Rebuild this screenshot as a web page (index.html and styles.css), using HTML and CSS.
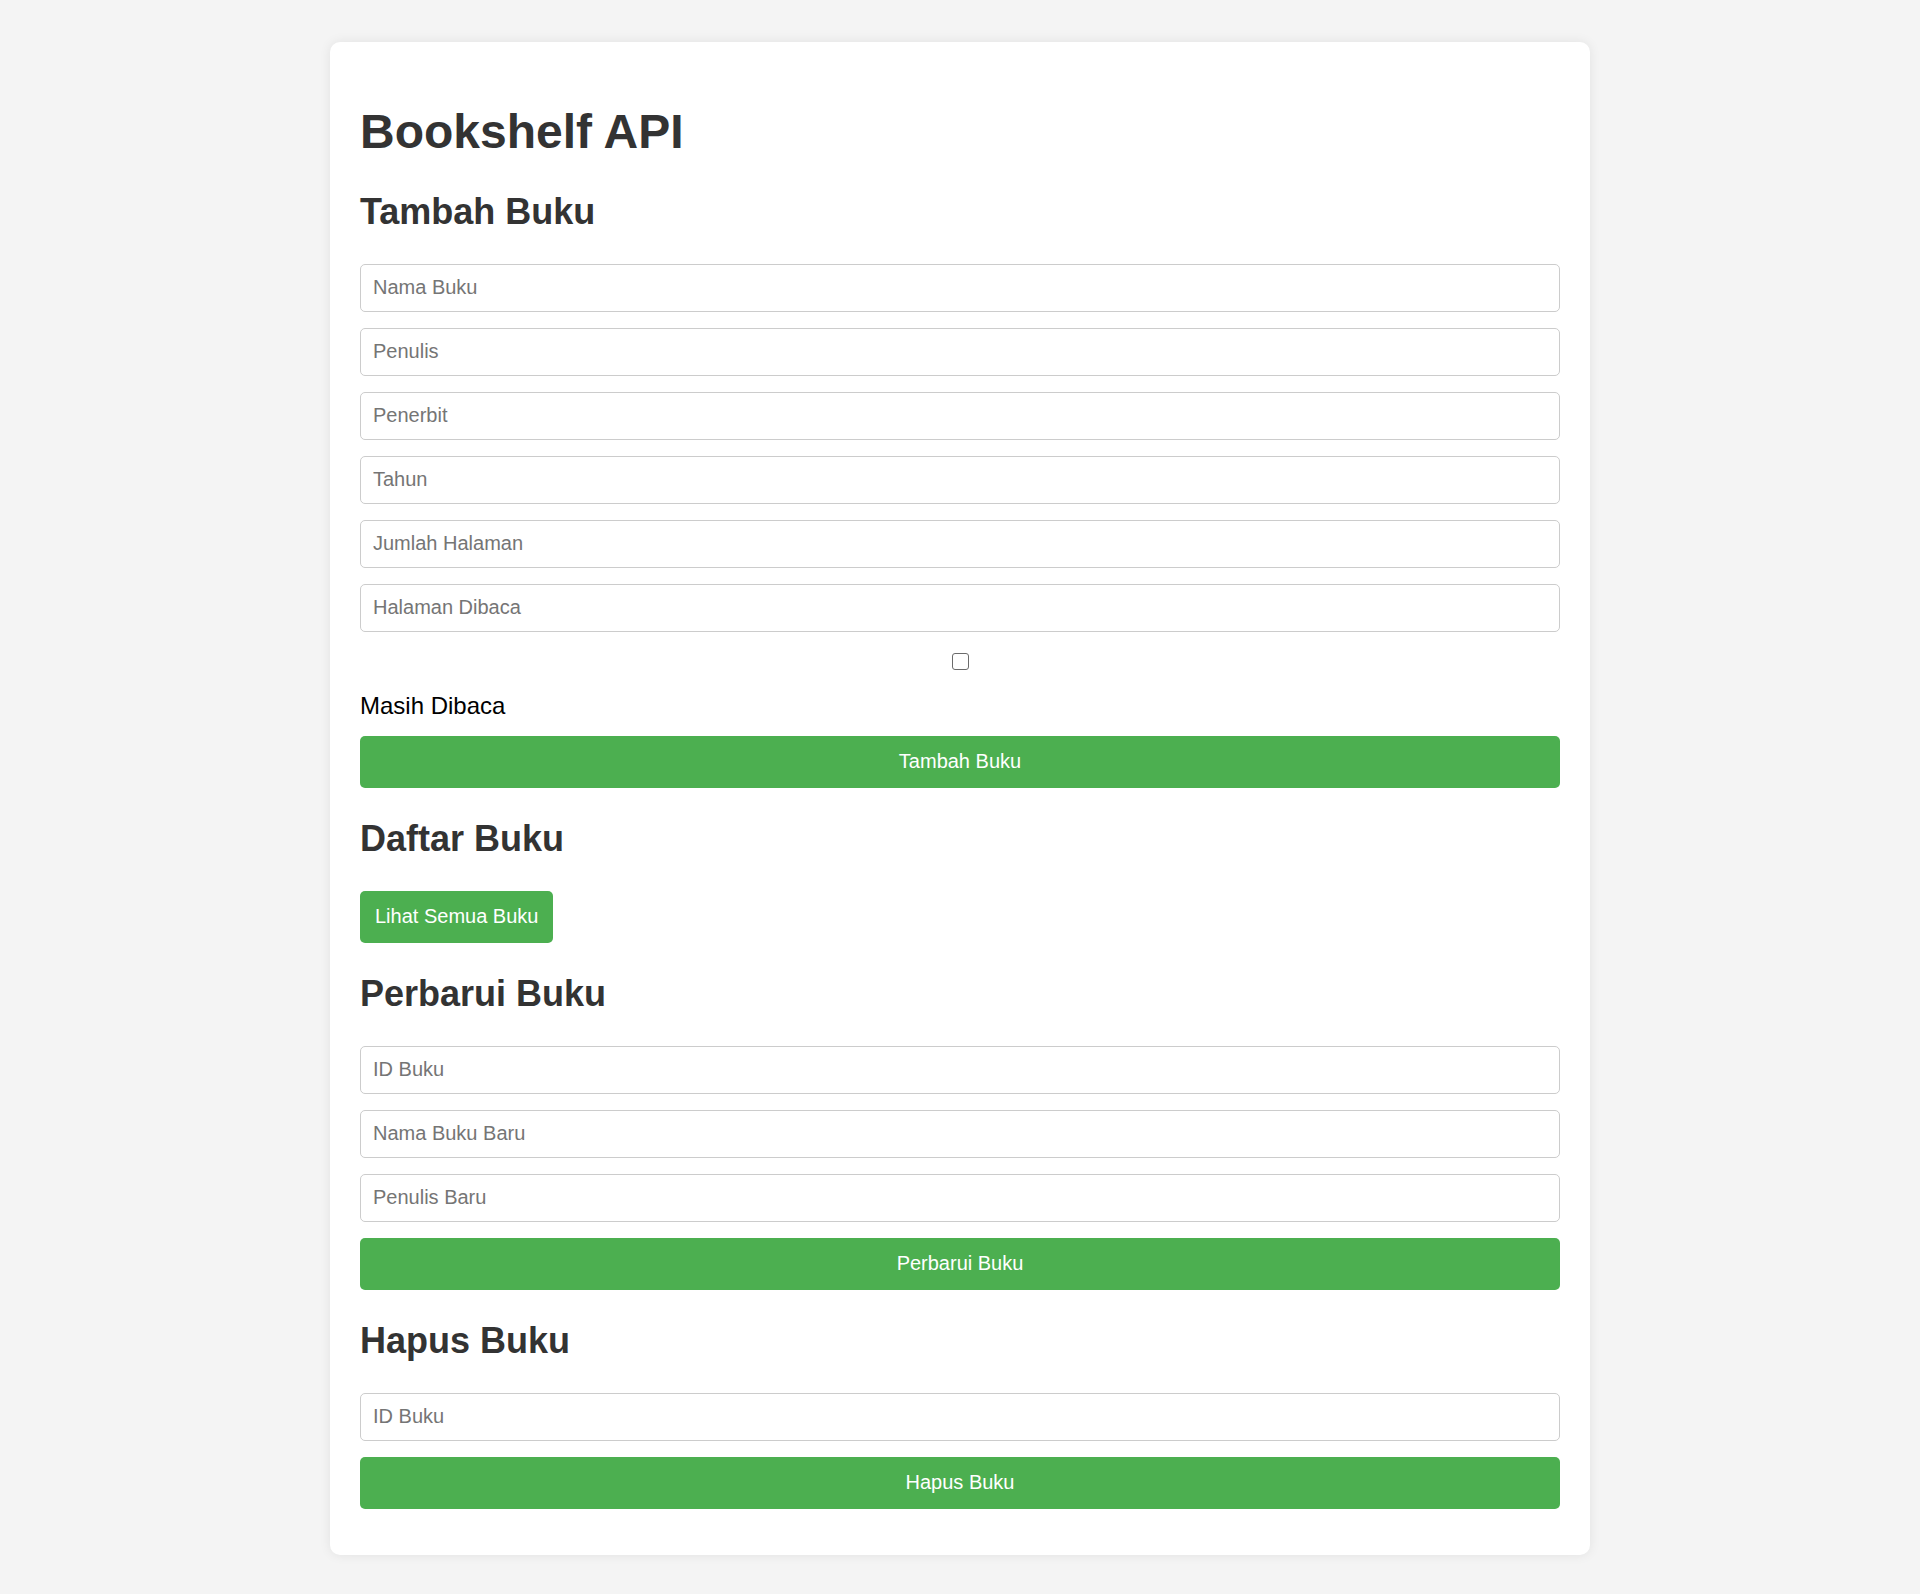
FILE: index.html
```html
<!DOCTYPE html>
<html lang="id">
<head>
<meta charset="utf-8">
<title>Bookshelf API</title>
<link rel="stylesheet" href="styles.css">
</head>
<body>
<div class="card">
  <h1 class="title">Bookshelf API</h1>

  <h2 class="section-title">Tambah Buku</h2>
  <form class="form">
    <input class="field" type="text" placeholder="Nama Buku">
    <input class="field" type="text" placeholder="Penulis">
    <input class="field" type="text" placeholder="Penerbit">
    <input class="field" type="text" placeholder="Tahun">
    <input class="field" type="text" placeholder="Jumlah Halaman">
    <input class="field" type="text" placeholder="Halaman Dibaca">
    <div class="check-row"><input class="check" type="checkbox" id="reading"></div>
    <label class="check-label" for="reading">Masih Dibaca</label>
    <button class="btn btn-full" type="button">Tambah Buku</button>
  </form>

  <h2 class="section-title">Daftar Buku</h2>
  <div class="list-actions">
    <button class="btn btn-inline" type="button">Lihat Semua Buku</button>
  </div>

  <h2 class="section-title">Perbarui Buku</h2>
  <form class="form">
    <input class="field" type="text" placeholder="ID Buku">
    <input class="field" type="text" placeholder="Nama Buku Baru">
    <input class="field" type="text" placeholder="Penulis Baru">
    <button class="btn btn-full" type="button">Perbarui Buku</button>
  </form>

  <h2 class="section-title">Hapus Buku</h2>
  <form class="form">
    <input class="field" type="text" placeholder="ID Buku">
    <button class="btn btn-full" type="button">Hapus Buku</button>
  </form>
</div>
</body>
</html>
```

FILE: styles.css
```css
html, body {
  margin: 0;
  padding: 0;
}

body {
  background: #f4f4f4;
  font-family: "Liberation Sans", Arial, sans-serif;
  color: #333;
  padding: 42px 0;
}

.card {
  width: 1200px;
  margin: 0 auto;
  padding: 30px;
  background: #fff;
  border-radius: 10px;
  box-shadow: 0 0 12px rgba(0, 0, 0, 0.08);
  display: flow-root;
}

.title {
  font-size: 48px;
  font-weight: bold;
  line-height: normal;
  margin: 32px 0 32px;
  color: #333;
}

.section-title {
  font-size: 36px;
  font-weight: bold;
  line-height: normal;
  margin: 30px 0 30.5px;
  color: #333;
}

.form {
  margin: 0;
  display: block;
}

.field {
  display: block;
  box-sizing: border-box;
  width: 100%;
  height: 48px;
  padding: 0 12px;
  margin: 0 0 16px;
  border: 1px solid #ccc;
  border-radius: 5px;
  font-family: "Liberation Sans", Arial, sans-serif;
  font-size: 20px;
  color: #333;
  background: #fff;
  outline: none;
}

.field::placeholder {
  color: #757575;
}

.check-row {
  display: flex;
  justify-content: center;
  align-items: flex-start;
  box-sizing: border-box;
  height: 44px;
  padding-top: 5.5px;
}

.check {
  appearance: none;
  -webkit-appearance: none;
  box-sizing: border-box;
  width: 17px;
  height: 17px;
  margin: 0;
  border: 1.5px solid #6b6b6b;
  border-radius: 3px;
  background: #fff;
}

.check-label {
  display: block;
  font-size: 24px;
  line-height: normal;
  color: #000;
  margin-bottom: 16px;
}

.btn {
  box-sizing: border-box;
  height: 52.5px;
  border: none;
  border-radius: 5px;
  background: #4caf50;
  color: #fff;
  font-family: "Liberation Sans", Arial, sans-serif;
  font-size: 20px;
  cursor: pointer;
}

.btn-full {
  display: block;
  width: 100%;
  padding: 0;
  margin: 0 0 16px;
}

.list-actions {
  display: flex;
}

.btn-inline {
  padding: 0 15px;
}
```
